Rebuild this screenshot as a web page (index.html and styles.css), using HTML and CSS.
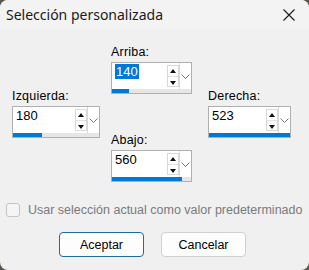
FILE: index.html
```html
<!DOCTYPE html>
<html lang="es">
<head>
    <meta charset="UTF-8">
    <title>Selección personalizada</title>
    <link rel="stylesheet" href="styles.css">
</head>
<body>
    <div class="window">
        <div class="titlebar">
            <span class="title">Selección personalizada</span>
            <svg class="close" width="12" height="12" viewBox="0 0 12 12">
                <path d="M0.5 0.5 L11.5 11.5 M11.5 0.5 L0.5 11.5" stroke="#1a1a1a" stroke-width="1.1" fill="none"/>
            </svg>
        </div>

        <div class="content">
            <div class="grid">
                <div class="field top">
                    <div class="field-label">Arriba:</div>
                    <div class="spin">
                        <div class="spin-main">
                            <span class="spin-value"><span class="selected">140</span></span>
                            <div class="spin-btns"><span class="btn-up"></span><span class="btn-down"></span></div>
                        </div>
                        <div class="spin-drop"><svg width="9" height="5" viewBox="0 0 9 5"><path d="M0.5 0.5 L4.5 4.5 L8.5 0.5" stroke="#7a7a7a" fill="none"/></svg></div>
                        <div class="spin-track"><div class="spin-fill" style="width: 21%"></div></div>
                    </div>
                </div>

                <div class="field left">
                    <div class="field-label">Izquierda:</div>
                    <div class="spin">
                        <div class="spin-main">
                            <span class="spin-value">180</span>
                            <div class="spin-btns"><span class="btn-up"></span><span class="btn-down"></span></div>
                        </div>
                        <div class="spin-drop"><svg width="9" height="5" viewBox="0 0 9 5"><path d="M0.5 0.5 L4.5 4.5 L8.5 0.5" stroke="#7a7a7a" fill="none"/></svg></div>
                        <div class="spin-track"><div class="spin-fill" style="width: 34%"></div></div>
                    </div>
                </div>

                <div class="field right">
                    <div class="field-label">Derecha:</div>
                    <div class="spin">
                        <div class="spin-main">
                            <span class="spin-value">523</span>
                            <div class="spin-btns"><span class="btn-up"></span><span class="btn-down"></span></div>
                        </div>
                        <div class="spin-drop"><svg width="9" height="5" viewBox="0 0 9 5"><path d="M0.5 0.5 L4.5 4.5 L8.5 0.5" stroke="#7a7a7a" fill="none"/></svg></div>
                        <div class="spin-track"><div class="spin-fill" style="width: 100%"></div></div>
                    </div>
                </div>

                <div class="field bottom">
                    <div class="field-label">Abajo:</div>
                    <div class="spin">
                        <div class="spin-main">
                            <span class="spin-value">560</span>
                            <div class="spin-btns"><span class="btn-up"></span><span class="btn-down"></span></div>
                        </div>
                        <div class="spin-drop"><svg width="9" height="5" viewBox="0 0 9 5"><path d="M0.5 0.5 L4.5 4.5 L8.5 0.5" stroke="#7a7a7a" fill="none"/></svg></div>
                        <div class="spin-track"><div class="spin-fill" style="width: 88%"></div></div>
                    </div>
                </div>
            </div>

            <label class="check">
                <span class="check-box"></span>
                <span class="check-text">Usar selección actual como valor predeterminado</span>
            </label>

            <div class="buttons">
                <button class="button primary">Aceptar</button>
                <button class="button">Cancelar</button>
            </div>
        </div>
    </div>
</body>
</html>
```

FILE: styles.css
```css
* {
    margin: 0;
    padding: 0;
    box-sizing: border-box;
}

body {
    background-color: #5c5650;
    font-family: "Liberation Sans", Arial, sans-serif;
    font-size: 12px;
    color: #000;
}

.window {
    width: 309px;
    height: 270px;
    background-color: #f0f0f0;
    border-radius: 8px;
    overflow: hidden;
}

.titlebar {
    height: 29px;
    background-color: #f3f3f3;
    display: flex;
    align-items: center;
    justify-content: space-between;
    padding: 0 14px 0 6px;
}

.title {
    font-family: "Noto Sans", sans-serif;
    font-size: 14px;
    color: #1a1a1a;
}

.content {
    padding-top: 15px;
}

/* spin controls */
.grid {
    display: grid;
    grid-template-columns: 99px 97px 83px;
    grid-auto-rows: 22px;
    padding-left: 12px;
}

.field.top { grid-column: 2; grid-row: 1 / span 3; }
.field.left { grid-column: 1; grid-row: 3 / span 3; }
.field.right { grid-column: 3; grid-row: 3 / span 3; }
.field.bottom { grid-column: 2; grid-row: 5 / span 3; }

.field.left .spin { width: 88px; }
.field.top .spin, .field.bottom .spin { width: 81px; }
.field.right .spin { width: 83px; }

.field-label {
    height: 16px;
    line-height: 16px;
    margin-bottom: 2px;
    font-size: 12.5px;
    letter-spacing: 0.2px;
}

.spin {
    height: 32px;
    border: 1px solid #b0b0b0;
    background-color: #fff;
    display: grid;
    grid-template-columns: 1fr 12px;
    grid-template-rows: 1fr 4px;
}

.spin-main {
    display: flex;
    justify-content: space-between;
    padding: 2px 0 0 3px;
}

.spin-value {
    font-size: 13px;
    line-height: 14px;
    height: 14px;
}

.selected {
    background-color: #0078d7;
    color: #fff;
    padding: 0 1px;
}

.spin-btns {
    width: 12px;
    border: 1px solid #d9d9d9;
    display: flex;
    flex-direction: column;
    margin-bottom: 2px;
}

.btn-up, .btn-down {
    flex: 1;
    position: relative;
}

.btn-up {
    border-bottom: 1px solid #e2e2e2;
}

.btn-up::after, .btn-down::after {
    content: "";
    position: absolute;
    left: 2px;
    top: 3px;
    border-left: 3.5px solid transparent;
    border-right: 3.5px solid transparent;
}

.btn-up::after {
    border-bottom: 4px solid #111;
}

.btn-down::after {
    border-top: 4px solid #111;
    top: 4px;
}

.spin-drop {
    border-left: 1px solid #d9d9d9;
    display: flex;
    align-items: center;
    justify-content: center;
}

.spin-track {
    grid-column: 1 / span 2;
    background-color: #e6e6e6;
}

.spin-fill {
    height: 100%;
    background-color: #0078d7;
}

/* checkbox */
.check {
    display: flex;
    align-items: center;
    gap: 8px;
    padding-left: 6px;
    margin-top: 5px;
    height: 14px;
}

.check-box {
    width: 14px;
    height: 14px;
    border: 1px solid #c4c4c4;
    border-radius: 3px;
    background-color: #f5f5f5;
}

.check-text {
    color: #7a7a7a;
    font-size: 12.5px;
}

/* buttons */
.buttons {
    display: flex;
    justify-content: center;
    gap: 17px;
    margin-top: 15px;
    padding-right: 4px;
}

.button {
    width: 85px;
    height: 25px;
    font-family: "Liberation Sans", Arial, sans-serif;
    font-size: 12.5px;
    background-color: #fdfdfd;
    border: 1px solid #d0d0d0;
    border-radius: 4px;
    color: #000;
}

.button.primary {
    border-color: #1f6aa5;
}
```
